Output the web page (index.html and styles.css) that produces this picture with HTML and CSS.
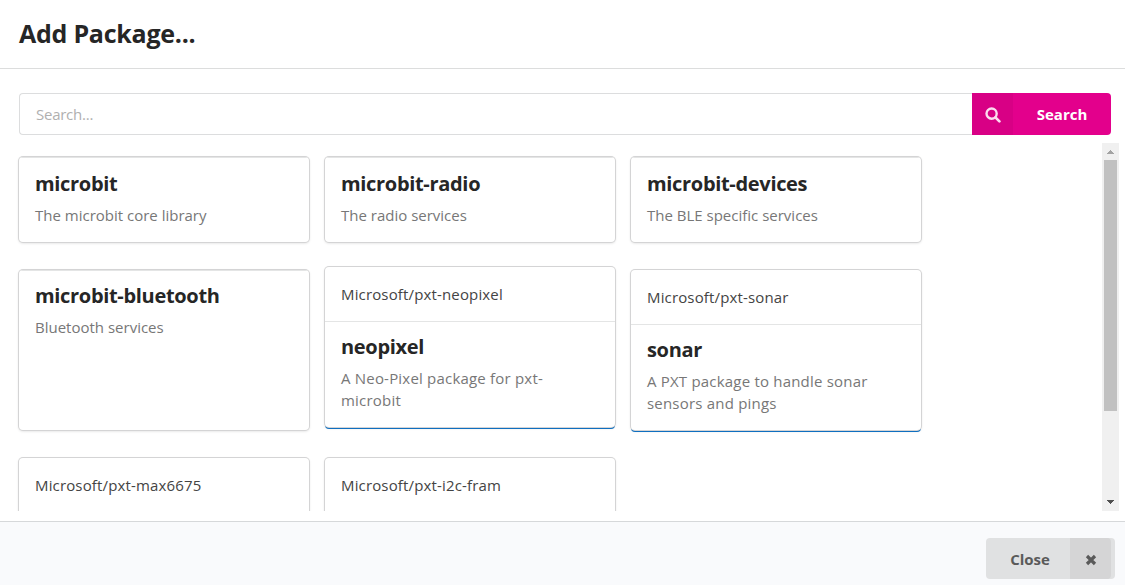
FILE: index.html
```html
<!DOCTYPE html>
<html lang="en">
<head>
<meta charset="utf-8">
<title>Add Package</title>
<link rel="stylesheet" href="styles.css">
</head>
<body>
<div class="modal">
  <header class="modal-header"><h1 class="modal-title">Add Package...</h1></header>
  <main class="modal-content">
    <div class="search">
      <input class="search-input" type="text" placeholder="Search..." aria-label="Search">
      <button class="search-button">
        <span class="search-icon"><svg width="16" height="16" viewBox="0 0 16 16"><circle cx="6.6" cy="6.6" r="5.1" fill="none" stroke="currentColor" stroke-width="2.4"/><path d="M10.4 10.4L14.4 14.4" stroke="currentColor" stroke-width="2.7" stroke-linecap="round"/></svg></span>
        <span class="search-label">Search</span>
      </button>
    </div>
    <div class="results">
      <div class="cards">
        <article class="card core"><div class="content"><h2 class="name">microbit</h2><p class="description">The microbit core library</p></div></article>
        <article class="card core"><div class="content"><h2 class="name">microbit-radio</h2><p class="description">The radio services</p></div></article>
        <article class="card core"><div class="content"><h2 class="name">microbit-devices</h2><p class="description">The BLE specific services</p></div></article>
        <article class="card"><div class="content"><h2 class="name">microbit-bluetooth</h2><p class="description">Bluetooth services</p></div></article>
        <article class="card linked raised"><div class="repo">Microsoft/pxt-neopixel</div><div class="content"><h2 class="name">neopixel</h2><p class="description">A Neo-Pixel package for pxt-<br>microbit</p></div></article>
        <article class="card linked"><div class="repo">Microsoft/pxt-sonar</div><div class="content"><h2 class="name">sonar</h2><p class="description">A PXT package to handle sonar<br>sensors and pings</p></div></article>
        <article class="card"><div class="repo">Microsoft/pxt-max6675</div><div class="content"></div></article>
        <article class="card"><div class="repo">Microsoft/pxt-i2c-fram</div><div class="content"></div></article>
      </div>
      <div class="scrollbar">
        <svg class="arrow arrow-up" width="17" height="17" viewBox="0 0 17 17" shape-rendering="crispEdges"><path d="M8 7h1v1h1v1h1v1h1v1H5v-1h1V9h1V8h1z"/></svg>
        <div class="thumb"></div>
        <svg class="arrow arrow-down" width="17" height="17" viewBox="0 0 17 17" shape-rendering="crispEdges"><path d="M5 6h7v1h-1v1h-1v1H9v1H8V9H7V8H6V7H5z"/></svg>
      </div>
    </div>
  </main>
  <footer class="actions">
    <button class="close-button">
      <span class="close-label">Close</span>
      <span class="close-icon"><svg width="12" height="12" viewBox="0 0 12 12"><path d="M2 2L10 10M10 2L2 10" stroke="currentColor" stroke-width="3.2"/></svg></span>
    </button>
  </footer>
</div>
</body>
</html>
```
FILE: styles.css
```css
* { box-sizing: border-box; }
body { margin: 0; font-family: "Open Sans", "Noto Sans", sans-serif; font-size: 15px; color: #262626; background: #fff; }
h1, h2, p { margin: 0; }
button { border: 0; padding: 0; font: inherit; font-weight: 700; display: flex; }
.modal { width: 1125px; height: 585px; display: flex; flex-direction: column; overflow: hidden; }
.modal-header { height: 69px; flex: none; padding: 16px 19px; border-bottom: 1px solid #dcdddd; }
.modal-title { font-size: 25px; line-height: 34px; font-weight: 700; letter-spacing: -0.25px; }
.modal-content { height: 452px; flex: none; padding: 24px 0 0; }
.search { display: flex; height: 42px; margin: 0 14px 0 19px; }
.search-input { flex: 1; min-width: 0; border: 1px solid #dcddde; border-right: 0; border-radius: 4px 0 0 4px; padding: 0 16px; font: inherit; color: inherit; }
.search-input::placeholder { color: #b0b0b0; opacity: 1; letter-spacing: -0.25px; }
.search-button { width: 139px; background: #e3008c; color: #fff; border-radius: 0 4px 4px 0; overflow: hidden; align-items: stretch; }
.search-icon { width: 41px; background: #d80085; color: #fbdcef; display: flex; align-items: center; justify-content: center; padding-top: 1px; }
.search-label { flex: 1; line-height: 42px; text-align: center; }
.results { display: flex; justify-content: space-between; height: 368px; margin-top: 8px; overflow: hidden; }
.cards { display: grid; grid-template-columns: repeat(3, 290px); grid-template-rows: 85px 160px 160px; column-gap: 16px; row-gap: 28px; padding: 14px 0 0 19px; }
.card { background: #fff; border-radius: 4px; box-shadow: 0 0 0 1px #d4d4d5, 0 1px 3px 0 #d4d4d5; overflow: hidden; }
.linked { box-shadow: 0 0 0 1px #d4d4d5, 0 2px 0 0 #0f6fc0, 0 1px 3px 0 #d4d4d5; }
.raised { transform: translateY(-3px); }
.content { border-top: 1px solid #e4e5e5; padding: 12px 16px; }
.core .content { padding-top: 13px; }
.repo { height: 54px; padding: 0 16px; line-height: 54px; letter-spacing: 0.15px; color: #444; }
.name { font-size: 20px; line-height: 26px; font-weight: 700; letter-spacing: -0.32px; }
.description { margin-top: 7px; line-height: 22px; color: #777; }
.linked .description { letter-spacing: 0.2px; }
.scrollbar { width: 17px; margin-right: 6px; background: #f0f0f0; display: flex; flex-direction: column; align-items: center; }
.thumb { width: 13px; height: 251px; background: #c1c1c1; }
.arrow { flex: none; }
.arrow-up { fill: #a3a3a3; }
.arrow-down { fill: #505050; margin-top: auto; }
.actions { flex: 1; background: #f9fafc; border-top: 1px solid #d6d8da; display: flex; justify-content: flex-end; padding: 16px 10px 0 0; }
.close-button { width: 129px; height: 41px; border-radius: 4px; background: #e0e1e2; color: #5a5a5a; padding-right: 4px; }
.close-label { flex: 1; text-align: center; line-height: 42px; padding-left: 4px; }
.close-icon { width: 41px; height: 41px; background: #d5d5d6; border-radius: 0 4px 4px 0; display: flex; align-items: center; justify-content: center; padding-top: 2px; }
```
